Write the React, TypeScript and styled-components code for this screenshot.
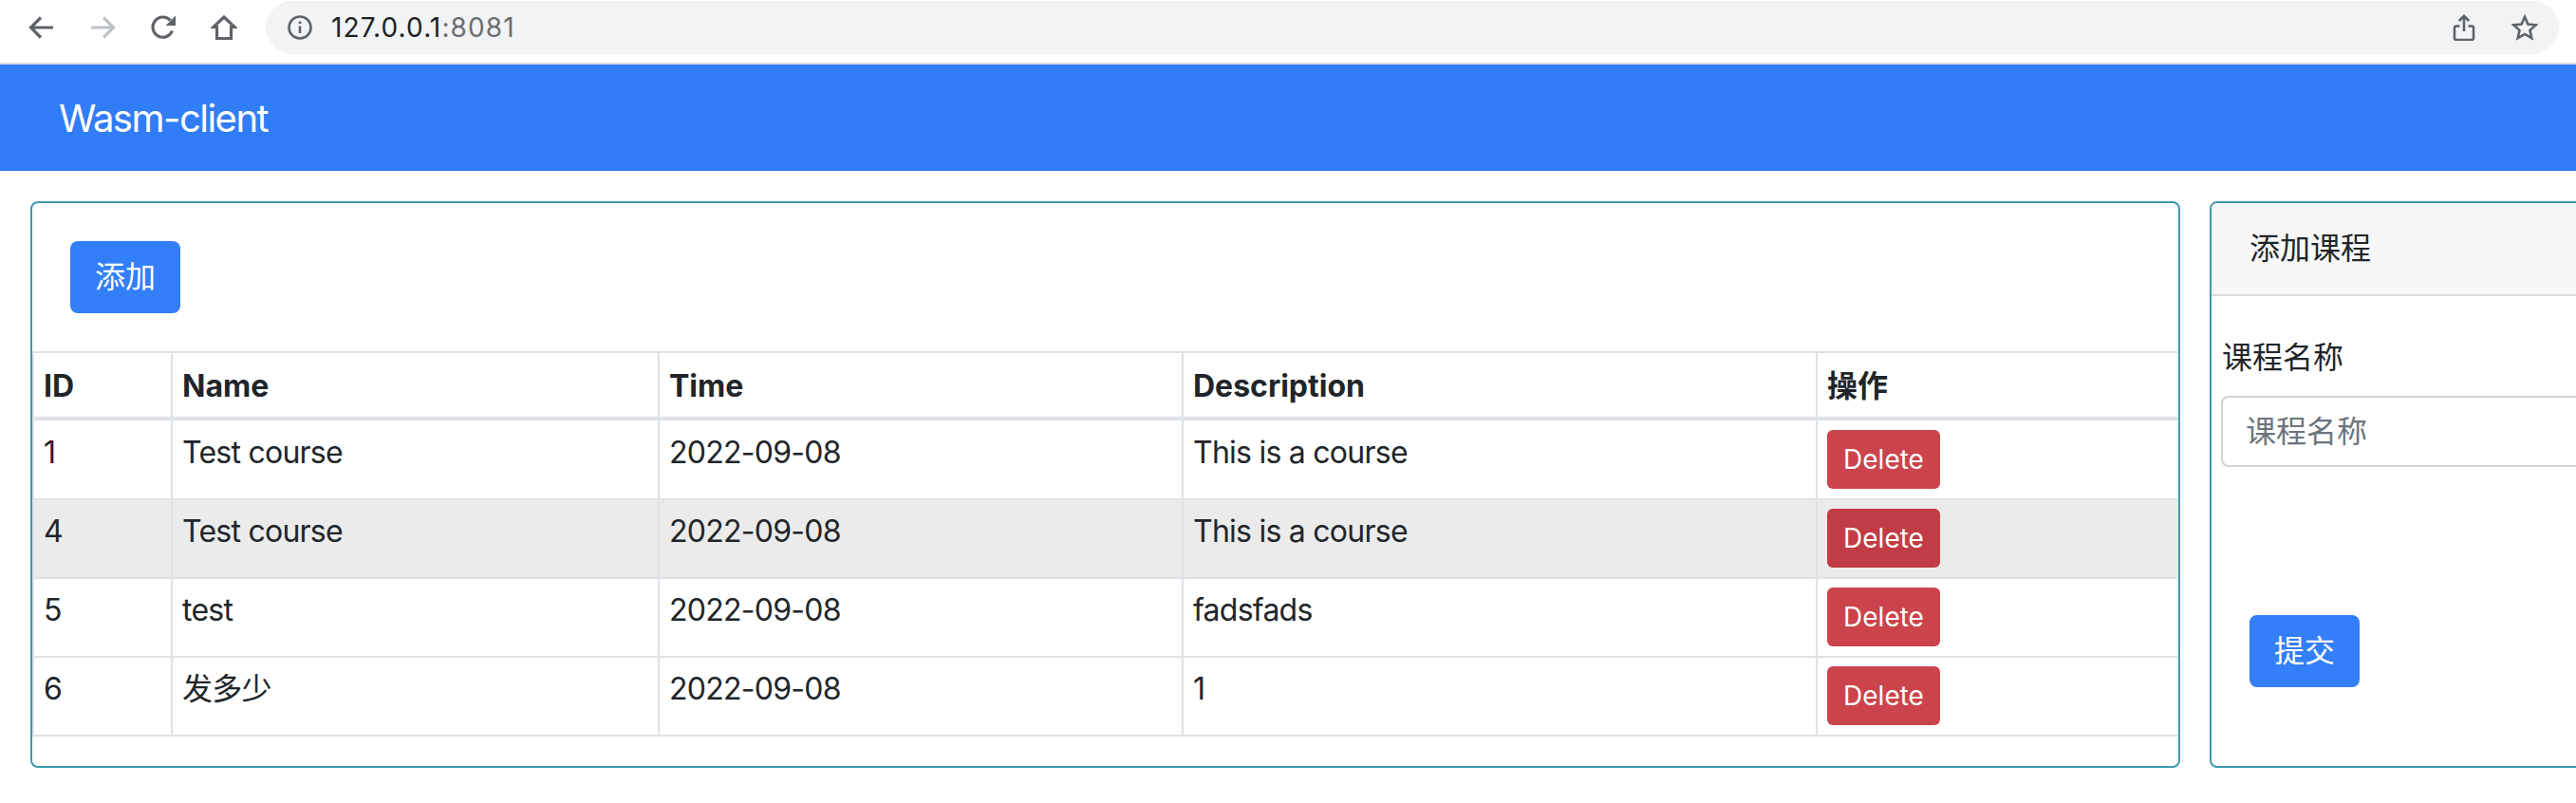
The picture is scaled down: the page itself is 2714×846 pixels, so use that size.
import styled, { createGlobalStyle } from 'styled-components'

type Course = {
  id: number
  name: string
  time: string
  description: string
}

const courses: Course[] = [
  { id: 1, name: 'Test course', time: '2022-09-08', description: 'This is a course' },
  { id: 4, name: 'Test course', time: '2022-09-08', description: 'This is a course' },
  { id: 5, name: 'test', time: '2022-09-08', description: 'fadsfads' },
  { id: 6, name: '发多少', time: '2022-09-08', description: '1' },
]

const HOVERED_ID = 4

const App = () => {
  return (
    <>
      <GlobalStyle />
      <BrowserBar>
        <NavIcon viewBox="0 0 28 28">
          <path d="M26 14H3M13 3.5 2.5 14 13 24.5" />
        </NavIcon>
        <NavIcon viewBox="0 0 28 28" $disabled>
          <path d="M2 14h23M15 3.5 25.5 14 15 24.5" />
        </NavIcon>
        <NavIcon viewBox="0 0 28 28">
          <path d="M23.5 17.5A10.6 10.6 0 1 1 21.5 6.5" />
          <path d="M27 1.5V12H16.500z" fill="#5f6368" stroke="none" />
        </NavIcon>
        <NavIcon viewBox="0 0 28 28">
          <path d="M14 3 2.800 13.500H6.500V25.500H21.500V13.500H25.200Z" />
        </NavIcon>
        <AddressBar>
          <InfoIcon viewBox="0 0 26 26">
            <circle cx="13" cy="13" r="11.5" />
            <path d="M13 11.500v7.500" />
            <circle cx="13" cy="7.800" r="1.500" fill="#5f6368" stroke="none" />
          </InfoIcon>
          <Url>
            127.0.0.1<UrlPort>:8081</UrlPort>
          </Url>
          <AddressActions>
            <ActionIcon viewBox="0 0 28 28">
              <path d="M9.500 12.500H5.800A1.800 1.800 0 0 0 4 14.300V25.200A1.800 1.800 0 0 0 5.800 27H22.200A1.800 1.800 0 0 0 24 25.200V14.300A1.800 1.800 0 0 0 22.200 12.500H18.500" />
              <path d="M14 18V2M8.800 7 14 1.800 19.200 7" />
            </ActionIcon>
            <ActionIcon viewBox="0 0 28 28">
              <path d="M14 2.800 17.400 10.500 25.800 11.300 19.500 16.900 21.300 25.200 14 20.900 6.700 25.200 8.500 16.900 2.200 11.300 10.600 10.500Z" />
            </ActionIcon>
          </AddressActions>
        </AddressBar>
      </BrowserBar>

      <Navbar>
        <Brand>Wasm-client</Brand>
      </Navbar>

      <Main>
        <ListPanel>
          <Toolbar>
            <PrimaryButton type="button">添加</PrimaryButton>
          </Toolbar>
          <Table>
            <colgroup>
              <col style={{ width: 146 }} />
              <col style={{ width: 513 }} />
              <col style={{ width: 552 }} />
              <col style={{ width: 668 }} />
              <col style={{ width: 382 }} />
            </colgroup>
            <thead>
              <tr>
                <HeadCell>ID</HeadCell>
                <HeadCell>Name</HeadCell>
                <HeadCell>Time</HeadCell>
                <HeadCell>Description</HeadCell>
                <HeadCell>操作</HeadCell>
              </tr>
            </thead>
            <tbody>
              {courses.map((c) => (
                <Row key={c.id} $hovered={c.id === HOVERED_ID}>
                  <Cell>{c.id}</Cell>
                  <Cell>{c.name}</Cell>
                  <Cell>{c.time}</Cell>
                  <Cell>{c.description}</Cell>
                  <Cell>
                    <DeleteButton type="button" $hovered={c.id === HOVERED_ID}>
                      Delete
                    </DeleteButton>
                  </Cell>
                </Row>
              ))}
            </tbody>
          </Table>
        </ListPanel>

        <FormPanel>
          <FormHeader>添加课程</FormHeader>
          <FormField>
            <FieldLabel htmlFor="course-name">课程名称</FieldLabel>
            <FieldInput id="course-name" placeholder="课程名称" readOnly />
          </FormField>
          <SubmitRow>
            <PrimaryButton type="button">提交</PrimaryButton>
          </SubmitRow>
        </FormPanel>
      </Main>
    </>
  )
}

const GlobalStyle = createGlobalStyle`
  * {
    box-sizing: border-box;
  }

  html,
  body {
    margin: 0;
    width: 2714px;
    height: 846px;
    overflow: hidden;
    background: #fff;
    color: #212529;
    font-family: Inter, 'Noto Sans CJK SC', sans-serif;
    font-size: 32px;
    line-height: 48px;
  }
`

const BrowserBar = styled.div`
  display: flex;
  align-items: center;
  height: 68px;
  padding: 2px 18px 10px 30px;
  gap: 36px;
  border-bottom: 2px solid #dadce0;
  background: #fff;
`

const NavIcon = styled.svg<{ $disabled?: boolean }>`
  flex: none;
  width: 28px;
  height: 28px;
  fill: none;
  stroke: ${({ $disabled }) => ($disabled ? '#bdc1c6' : '#5f6368')};
  stroke-width: 3.2;
`

const AddressBar = styled.div`
  flex: 1;
  display: flex;
  align-items: center;
  height: 56px;
  margin-left: -6px;
  padding: 0 22px 0 23px;
  border-radius: 28px;
  background: #f1f3f4;
`

const InfoIcon = styled.svg`
  flex: none;
  width: 26px;
  height: 26px;
  fill: none;
  stroke: #5f6368;
  stroke-width: 2.6;
`

const Url = styled.span`
  margin-left: 20px;
  font-size: 28px;
  line-height: 40px;
  letter-spacing: 1.1px;
  color: #202124;
`

const UrlPort = styled.span`
  color: #6c6e72;
`

const AddressActions = styled.div`
  display: flex;
  gap: 36px;
  margin-left: auto;
`

const ActionIcon = styled.svg`
  display: block;
  width: 28px;
  height: 28px;
  fill: none;
  stroke: #5f6368;
  stroke-width: 2.6;
`

const Navbar = styled.nav`
  display: flex;
  align-items: center;
  height: 112px;
  padding: 2px 62px 0;
  background: #317df7;
`

const Brand = styled.span`
  font-size: 40px;
  line-height: 60px;
  letter-spacing: -1.5px;
  color: #fff;
`

const Main = styled.main`
  display: flex;
  gap: 31px;
  padding: 32px;
`

const Panel = styled.section`
  flex: none;
  height: 597px;
  border: 2px solid #3f98ae;
  border-radius: 8px;
  overflow: hidden;
`

const ListPanel = styled(Panel)`
  width: 2265px;
`

const FormPanel = styled(Panel)`
  width: 700px;
`

const Toolbar = styled.div`
  padding: 40px 40px;
`

const PrimaryButton = styled.button`
  display: block;
  width: 116px;
  height: 76px;
  padding: 0;
  border: 0;
  border-radius: 8px;
  background: #337ff9;
  color: #fff;
  font: inherit;
`

const Table = styled.table`
  width: 2261px;
  border-collapse: collapse;
  table-layout: fixed;
`

const HeadCell = styled.th`
  padding: 11px 10px 8px;
  border: 2px solid #dee2e6;
  border-bottom-width: 4px;
  font-weight: 700;
  text-align: left;
  vertical-align: top;
`

const Cell = styled.td`
  height: 83px;
  padding: 9px 10px;
  border: 2px solid #dee2e6;
  letter-spacing: -0.75px;
  vertical-align: top;
`

const Row = styled.tr<{ $hovered?: boolean }>`
  background: ${({ $hovered }) => ($hovered ? '#ebebeb' : '#fff')};

  &:first-child ${Cell} {
    height: 85px;
    padding-top: 10px;
  }
`

const DeleteButton = styled.button<{ $hovered?: boolean }>`
  display: block;
  width: 119px;
  height: 62px;
  padding: 0;
  border: 0;
  border-radius: 6px;
  background: ${({ $hovered }) => ($hovered ? '#c13c45' : '#cb444b')};
  color: #fff;
  font: inherit;
  font-size: 28px;
  line-height: 42px;
`

const FormHeader = styled.div`
  padding: 24px 40px;
  border-bottom: 2px solid #dcdcdc;
  background: #f7f7f7;
`

const FormField = styled.div`
  display: flex;
  flex-direction: column;
  padding: 41px 0 0 10px;
`

const FieldLabel = styled.label`
  margin: 0 0 16px 1px;
`

const FieldInput = styled.input`
  width: 680px;
  height: 75px;
  padding: 0 24px;
  border: 2px solid #ced4da;
  border-radius: 8px;
  font: inherit;
  color: #212529;

  &::placeholder {
    color: #6c757d;
    opacity: 1;
  }
`

const SubmitRow = styled.div`
  padding: 156px 0 0 40px;
`

export default App
